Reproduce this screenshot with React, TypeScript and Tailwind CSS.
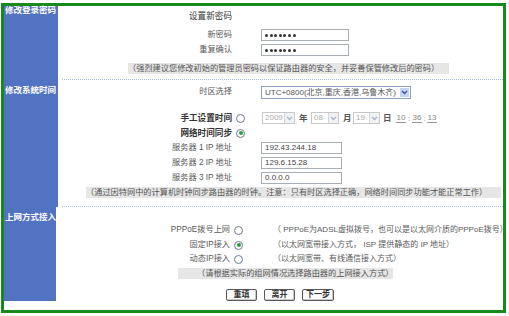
import React from "react";

function Radio({ checked }: { checked?: boolean }) {
  return (
    <span className="inline-flex h-[9px] w-[9px] items-center justify-center rounded-full border border-[#6b7a90] bg-white">
      {checked ? <span className="h-[4px] w-[4px] rounded-full bg-[#2e9b3e]" /> : null}
    </span>
  );
}

function Chevron({ color }: { color: string }) {
  return (
    <svg width="7" height="5" viewBox="0 0 7 5">
      <path d="M1 1l2.5 2.5L6 1" stroke={color} strokeWidth="1.4" fill="none" />
    </svg>
  );
}

function Row({
  label,
  radio,
  className,
  labelClass,
  children,
}: {
  label: string;
  radio?: "on" | "off";
  className?: string;
  labelClass?: string;
  children?: React.ReactNode;
}) {
  return (
    <div className={`flex h-[12px] items-center ${className ?? ""}`}>
      <span className={`w-[174px] whitespace-nowrap text-right ${labelClass ?? "text-[8.2px] text-[#5a5a5a]"}`}>{label}</span>
      <span className="flex w-[29px] pl-[4px]">{radio ? <Radio checked={radio === "on"} /> : null}</span>
      <div className="flex items-center">{children}</div>
    </div>
  );
}

function TextBox({ value, w, dots }: { value: string; w: string; dots?: boolean }) {
  return (
    <div className={`flex h-[12px] ${w} items-center border border-[#a7aeb8] bg-white pl-[3px]`}>
      {dots ? (
        <span className="flex gap-[1.6px]">
          {Array.from({ length: 7 }).map((_, i) => (
            <span key={i} className="h-[3px] w-[3px] rounded-full bg-[#333]" />
          ))}
        </span>
      ) : (
        <span className="text-[8px] leading-none text-[#444]">{value}</span>
      )}
    </div>
  );
}

function DateSelect({ value, w }: { value: string; w: string }) {
  return (
    <div className={`flex h-[12px] ${w} items-center justify-between border border-[#c8c8c8] bg-white pl-[2px]`}>
      <span className="text-[8px] leading-none text-[#aaa]">{value}</span>
      <span className="flex h-full w-[10px] items-center justify-center border-l border-[#d6d6d6] bg-[#f1f2f5]">
        <Chevron color="#a9b4c6" />
      </span>
    </div>
  );
}

function Hint({ text, className }: { text: string; className: string }) {
  return (
    <div className={`h-[11px] whitespace-nowrap bg-[#e6e6e6] text-[8.2px] leading-[11px] text-[#555] ${className}`}>
      {text}
    </div>
  );
}

function Dotted({ className }: { className: string }) {
  return <div className={`ml-[4px] h-0 border-t border-dotted border-[#a9bde0] ${className}`} />;
}

function Section({ title, top, children }: { title: string; top: string; children: React.ReactNode }) {
  return (
    <div className="flex">
      <div className={`w-[54px] shrink-0 bg-[#5273c2] pl-[1px] ${top}`}>
        <div className="whitespace-nowrap text-[8.5px] font-bold leading-[9px] text-white">{title}</div>
      </div>
      <div className="flex flex-1 flex-col">{children}</div>
    </div>
  );
}

export default function App() {
  return (
    <div className="h-[316px] w-[509px] bg-white pl-[1px] pt-[3px] font-['Liberation_Sans','Noto_Sans_CJK_SC',sans-serif]">
      <div className="flex h-[310px] w-[505px] flex-col border-[3px] border-[#178a1c] bg-white">
        <Section title="修改登录密码" top="pt-0 h-[74px]">
          <Row label="设置新密码" className="mt-[4px]" labelClass="text-[8.6px] text-[#333]" />
          <Row label="新密码" className="mt-[7px]">
            <TextBox value="" w="w-[88px]" dots />
          </Row>
          <Row label="重复确认" className="mt-[3px]">
            <TextBox value="" w="w-[88px]" dots />
          </Row>
          <Hint
            className="ml-[70px] mt-[7px] w-[321px]"
            text="（强烈建议您修改初始的管理员密码以保证路由器的安全，并妥善保管修改后的密码）"
          />
          <Dotted className="mt-[5px]" />
        </Section>

        <Section title="修改系统时间" top="pt-[6px] h-[127px]">
          <div className="mt-[6px] flex h-[13px] items-center">
            <span className="w-[174px] text-right text-[8.2px] text-[#5a5a5a]">时区选择</span>
            <span className="w-[29px]" />
            <div className="flex h-[13px] w-[150px] items-center justify-between border border-[#8ea2c4] bg-white pl-[3px]">
              <span className="whitespace-nowrap text-[8px] leading-none text-[#555]">UTC+0800(北京,重庆,香港,乌鲁木齐)</span>
              <span className="mr-[1px] flex h-[9px] w-[9px] items-center justify-center bg-[#c3d4f7]">
                <Chevron color="#3a55a0" />
              </span>
            </div>
          </div>
          <Row label="手工设置时间" radio="off" className="mt-[13px]" labelClass="text-[8.6px] font-bold text-[#333]">
            <div className="ml-[1px] flex items-center">
              <DateSelect value="2009" w="w-[33px]" />
              <span className="ml-[4px] w-[7px] text-[8.5px] font-bold leading-none text-[#555]">年</span>
              <span className="ml-[5px]">
                <DateSelect value="08" w="w-[28px]" />
              </span>
              <span className="ml-[4px] w-[7px] text-[8.5px] font-bold leading-none text-[#555]">月</span>
              <span className="ml-[3px]">
                <DateSelect value="19" w="w-[27px]" />
              </span>
              <span className="ml-[3px] w-[7px] text-[8.5px] font-bold leading-none text-[#555]">日</span>
              <span className="ml-[6px] flex items-center text-[8px] leading-[9px] text-[#888]">
                <span className="w-[10px] border-b border-[#999] text-center">10</span>
                <span className="w-[6px] text-center">:</span>
                <span className="w-[10px] border-b border-[#999] text-center">36</span>
                <span className="w-[5px] text-center">:</span>
                <span className="w-[10px] border-b border-[#999] text-center">13</span>
              </span>
            </div>
          </Row>
          <Row label="网络时间同步" radio="on" className="mt-[3px]" labelClass="text-[8.6px] font-bold text-[#333]" />
          <Row label="服务器 1 IP 地址" className="mt-[3px]">
            <TextBox value="192.43.244.18" w="w-[81px]" />
          </Row>
          <Row label="服务器 2 IP 地址" className="mt-[3px]">
            <TextBox value="129.6.15.28" w="w-[81px]" />
          </Row>
          <Row label="服务器 3 IP 地址" className="mt-[3px]">
            <TextBox value="0.0.0.0" w="w-[81px]" />
          </Row>
          <Hint
            className="ml-[28px] mt-[3px] w-[415px]"
            text="（通过因特网中的计算机时钟同步路由器的时钟。注意：只有时区选择正确，网络时间同步功能才能正常工作）"
          />
          <Dotted className="mt-[8px]" />
        </Section>

        <Section title="上网方式接入" top="pt-[6px] flex-1">
          <Row label="PPPoE拨号上网" radio="off" className="mt-[17px]">
            <span className="ml-[14px] whitespace-nowrap text-[8px] text-[#5a5a5a]">（ PPPoE为ADSL虚拟拨号，也可以是以太网介质的PPPoE拨号）</span>
          </Row>
          <Row label="固定IP接入" radio="on" className="mt-[3px]">
            <span className="ml-[14px] whitespace-nowrap text-[8px] text-[#5a5a5a]">（以太网宽带接入方式， ISP 提供静态的 IP 地址）</span>
          </Row>
          <Row label="动态IP接入" radio="off" className="mt-[2px]">
            <span className="ml-[14px] whitespace-nowrap text-[8px] text-[#5a5a5a]">（以太网宽带、有线通信接入方式）</span>
          </Row>
          <Hint className="ml-[122px] mt-[3px] w-[215px] pl-[19px]" text="（请根据实际的组网情况选择路由器的上网接入方式）" />
          <div className="ml-[170px] mt-[10px] flex gap-[7px]">
            {["重填", "离开", "下一步"].map((b) => (
              <button
                key={b}
                className="flex h-[12px] min-w-[31px] items-center justify-center rounded-[2px] border border-[#5a5a5a] bg-[#fbfbfb] px-[3px] text-[8px] font-bold leading-none text-[#333] shadow-[inset_-1px_-1px_0_#c8c8c8]"
              >
                {b}
              </button>
            ))}
          </div>
        </Section>
      </div>
    </div>
  );
}
